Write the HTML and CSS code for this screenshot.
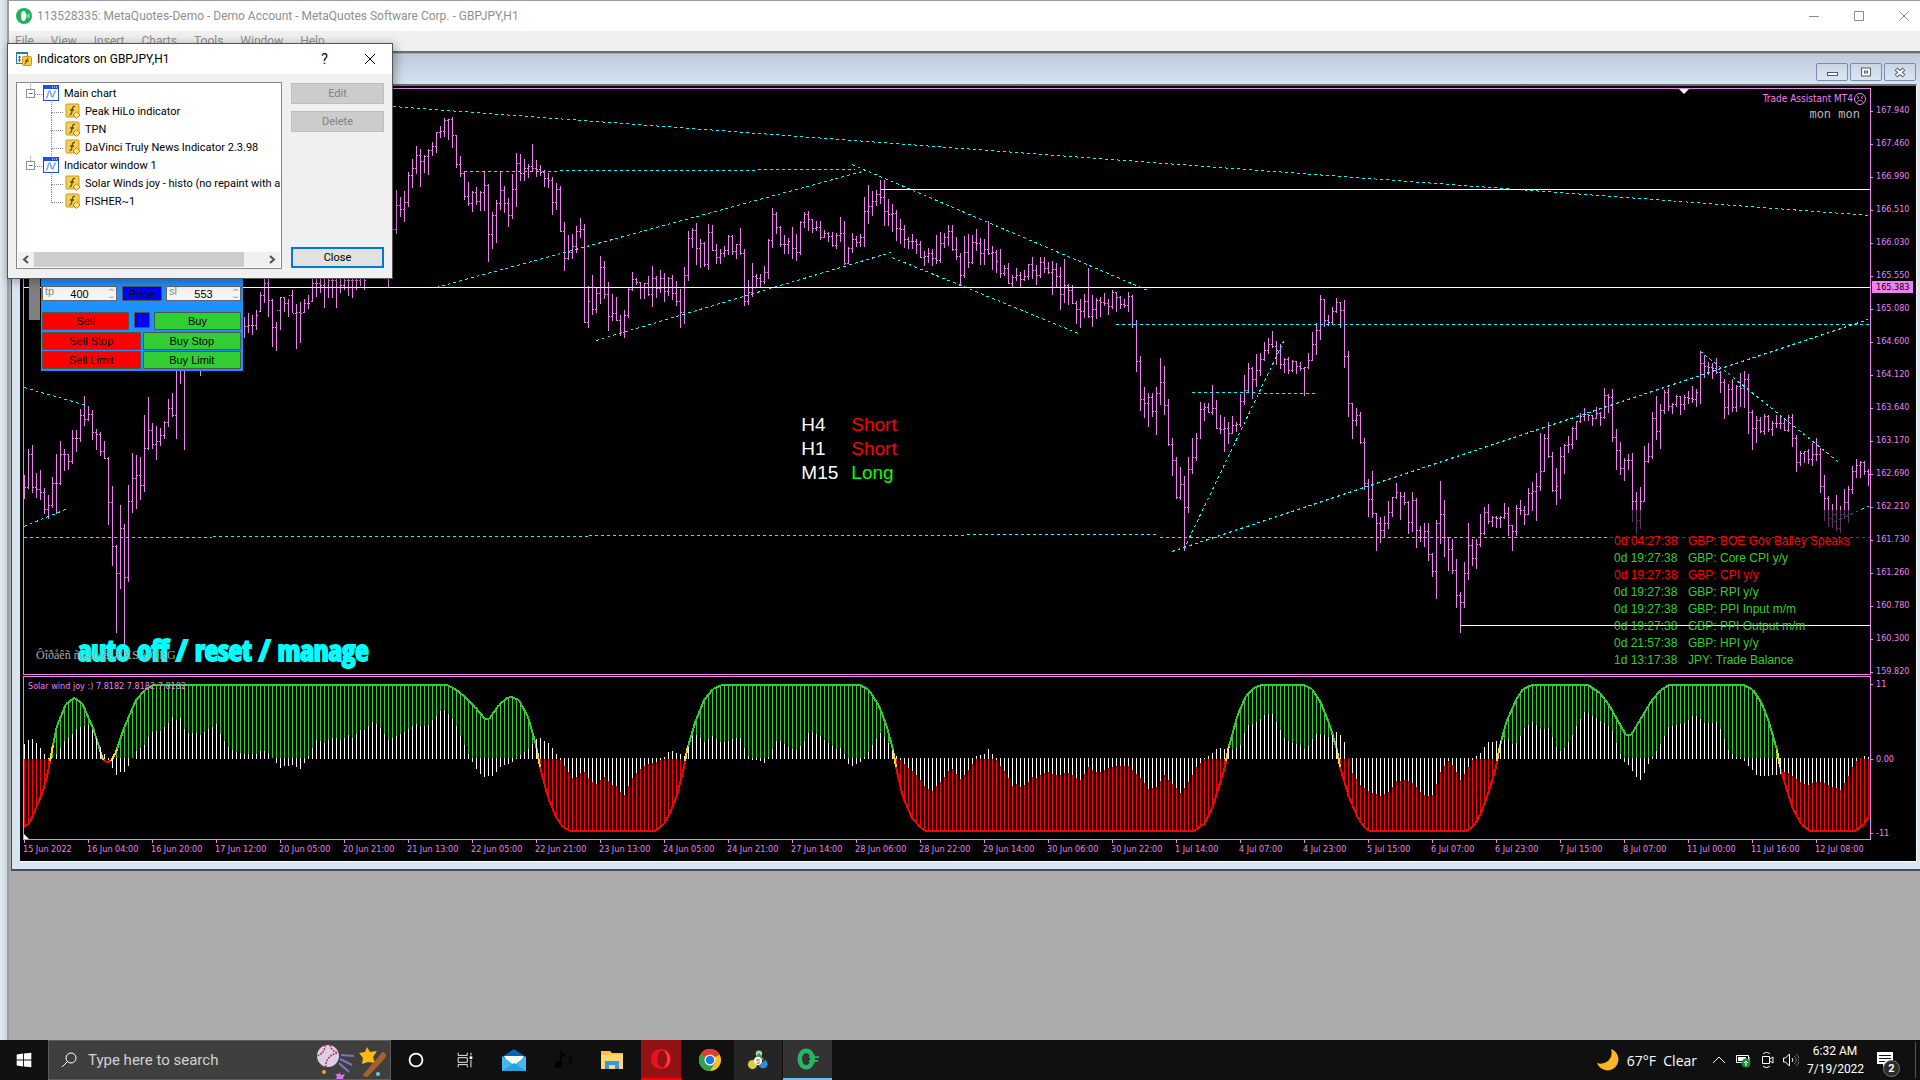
FILE: index.html
```html
<!DOCTYPE html>
<html lang="en">
<head>
    <meta charset="UTF-8">
    <meta name="viewport" content="width=device-width, initial-scale=1.0">
    <title>113528335: MetaQuotes-Demo - GBPJPY,H1</title>
    <link rel="stylesheet" href="styles.css">
</head>
<body>

    <!-- Shared tree icons -->
    <svg class="defs" aria-hidden="true">
        <symbol id="icon-chart" viewBox="0 0 16 16">
            <rect x="0.5" y="0.5" width="15" height="15" fill="#fff" stroke="#1c50c8"/>
            <rect x="0" y="0" width="16" height="4" fill="#1c50e0"/>
            <path d="M9 2h1M11 2h1M13 2h1" stroke="#fff"/>
            <path d="M3 13C5 13 5 6 6.500 6S8 12 9.500 12 11 6 13 6" fill="none" stroke="#7f9df0" stroke-width="1.500"/>
        </symbol>
        <symbol id="icon-fx" viewBox="0 0 16 16">
            <rect x="1" y="1" width="13" height="13" rx="1" fill="#f3cf57" stroke="#c8981a"/>
            <path d="M10 3.500C7 3 7.500 6 7 8S6.500 12 4.500 11.500M5 7h4" fill="none" stroke="#6b4a00" stroke-width="1.300"/>
            <path d="M11.500 8.500L15 12l-3.500 3.500L8 12z" fill="#ffe27a" stroke="#b98a12"/>
        </symbol>
    </svg>

    <main class="desktop">
        <div class="app-window">
            <header class="title-bar">
                <svg class="app-icon" viewBox="0 0 16 16"><circle cx="8" cy="8" r="8" fill="#22b060"/><ellipse cx="7.500" cy="8" rx="2.500" ry="5" fill="#fff"/><path d="M10 7h4M10 9h4" stroke="#fff" stroke-width="0.800"/></svg>
                <span class="title-text">113528335: MetaQuotes-Demo - Demo Account - MetaQuotes Software Corp. - GBPJPY,H1</span>
                <div class="window-controls">
                    <button type="button" aria-label="Minimize"><svg viewBox="0 0 12 12"><path d="M1 6.500h10"/></svg></button>
                    <button type="button" aria-label="Maximize"><svg viewBox="0 0 12 12"><path d="M1.500 1.500h9v9h-9z"/></svg></button>
                    <button type="button" aria-label="Close window"><svg viewBox="0 0 12 12"><path d="M1 1l10 10M11 1L1 11"/></svg></button>
                </div>
            </header>
            <nav class="menu-bar">
                <button type="button">File</button>
                <button type="button">View</button>
                <button type="button">Insert</button>
                <button type="button">Charts</button>
                <button type="button">Tools</button>
                <button type="button">Window</button>
                <button type="button">Help</button>
            </nav>

            <div class="workspace">
                <section class="chart-window">
                    <div class="chart-caption">
                        <button type="button" aria-label="Minimize chart"><svg viewBox="0 0 14 12"><rect x="2.500" y="6.500" width="10" height="3" fill="#fff" stroke="#555b66"/></svg></button>
                        <button type="button" aria-label="Restore chart"><svg viewBox="0 0 14 12"><rect x="2.500" y="2" width="9" height="8" fill="#fff" stroke="#555b66"/><rect x="5.500" y="5" width="3" height="2" fill="none" stroke="#555b66"/></svg></button>
                        <button type="button" aria-label="Close chart"><svg viewBox="0 0 14 12"><path d="M3 3l8 7M11 3l-8 7" stroke="#555b66" stroke-width="4"/><path d="M3.500 3.500l7 6M10.500 3.500l-7 6" stroke="#fff" stroke-width="2"/></svg></button>
                    </div>

                    <div class="chart-client">
                        <!-- Price chart -->
                        <div class="pane price-pane">
                            <svg id="price-svg" viewBox="24 89 1846 585" preserveAspectRatio="none"></svg>
                            <div class="order-strip"></div>
                            <form class="order-panel">
                                <div class="order-row levels">
                                    <div class="level"><label for="tp">tp</label><input id="tp" type="text" value="400"><i class="spin"></i></div>
                                    <button type="button" class="blue">Price</button>
                                    <div class="level"><label for="sl">sl</label><input id="sl" type="text" value="553"><i class="spin"></i></div>
                                </div>
                                <div class="order-row market">
                                    <button type="button" class="red">Sell</button>
                                    <button type="button" class="blue small" aria-label="Close all"></button>
                                    <button type="button" class="green">Buy</button>
                                </div>
                                <div class="order-row">
                                    <button type="button" class="red">Sell Stop</button>
                                    <button type="button" class="green">Buy Stop</button>
                                </div>
                                <div class="order-row">
                                    <button type="button" class="red">Sell Limit</button>
                                    <button type="button" class="green">Buy Limit</button>
                                </div>
                            </form>
                            <div class="expert-name">
                                <p>Trade Assistant MT4<svg viewBox="0 0 12 12"><circle cx="6" cy="6" r="5.500"/><path d="M3 9.500c1-3 5-3 6 0M3 3.500l2 1M9 3.500l-2 1M4 5v1M8 5v1"/></svg></p>
                                <p class="mono">mon mon</p>
                            </div>
                            <div class="signals">
                                <span>H4</span><span class="short">Short</span>
                                <span>H1</span><span class="short">Short</span>
                                <span>M15</span><span class="long">Long</span>
                            </div>
                            <ul class="news">
                                <li class="high"><span>0d 04:27:38</span>GBP: BOE Gov Bailey Speaks</li>
                                <li><span>0d 19:27:38</span>GBP: Core CPI y/y</li>
                                <li class="high"><span>0d 19:27:38</span>GBP: CPI y/y</li>
                                <li><span>0d 19:27:38</span>GBP: RPI y/y</li>
                                <li><span>0d 19:27:38</span>GBP: PPI Input m/m</li>
                                <li class="struck"><span>0d 19:27:38</span>GBP: PPI Output m/m</li>
                                <li><span>0d 21:57:38</span>GBP: HPI y/y</li>
                                <li><span>1d 13:17:38</span>JPY: Trade Balance</li>
                            </ul>
                            <p class="manage">auto off / reset / manage</p>
                            <p class="watermark">Ôîðåêñ ñîâåòíèê FXSA.ORG</p>
                        </div>
                        <div class="axis price-axis">
                            <span>167.940</span><span>167.460</span><span>166.990</span><span>166.510</span><span>166.030</span><span>165.550</span>
                            <span>165.080</span><span>164.600</span><span>164.120</span><span>163.640</span><span>163.170</span><span>162.690</span>
                            <span>162.210</span><span>161.730</span><span>161.260</span><span>160.780</span><span>160.300</span><span>159.820</span>
                            <b class="bid">165.383</b>
                        </div>

                        <!-- Indicator window -->
                        <div class="pane wave-pane">
                            <svg id="wave-svg" viewBox="24 677 1846 162" preserveAspectRatio="none"></svg>
                            <p class="wave-name">Solar wind joy :) 7.8182 7.8182 7.8182</p>
                        </div>
                        <div class="axis wave-axis"><span>11</span><span class="zero">0.00</span><span>-11</span></div>

                        <div class="time-axis" id="time-axis"></div>
                    </div>
                </section>
            </div>
        </div>

        <!-- Indicators list dialog -->
        <div class="dialog" role="dialog" aria-labelledby="dialog-title">
            <div class="dialog-title">
                <svg class="app-icon" viewBox="0 0 16 16"><rect x="0.500" y="1.500" width="11" height="11" fill="#fff" stroke="#2b78b8"/><path d="M0 2h12" stroke="#2b78b8" stroke-width="2"/><path d="M2 6h3M3.500 5v6M2 9h3" stroke="#567"/><rect x="6.500" y="5.500" width="9" height="9" rx="1" fill="#f6cf3f" stroke="#c8981a"/><path d="M12.500 7C10 7 11 13 8.500 13M9 10h4" fill="none" stroke="#5a4000"/></svg>
                <h1 id="dialog-title">Indicators on GBPJPY,H1</h1>
                <button type="button" class="help">?</button>
                <button type="button" aria-label="Close dialog"><svg viewBox="0 0 12 12"><path d="M1 1l10 10M11 1L1 11"/></svg></button>
            </div>
            <div class="dialog-body">
                <div class="tree">
                    <ul>
                        <li class="root"><i>−</i><svg><use href="#icon-chart"/></svg>Main chart</li>
                        <li><svg><use href="#icon-fx"/></svg>Peak HiLo indicator</li>
                        <li><svg><use href="#icon-fx"/></svg>TPN</li>
                        <li><svg><use href="#icon-fx"/></svg>DaVinci Truly News Indicator 2.3.98</li>
                        <li class="root last"><i>−</i><svg><use href="#icon-chart"/></svg>Indicator window 1</li>
                        <li><svg><use href="#icon-fx"/></svg>Solar Winds joy - histo (no repaint with a</li>
                        <li><svg><use href="#icon-fx"/></svg>FISHER~1</li>
                    </ul>
                    <div class="scroll">
                        <svg viewBox="0 0 16 15"><path d="M10 4L6 7.500l4 3.500"/></svg>
                        <span class="thumb"></span>
                        <svg viewBox="0 0 16 15"><path d="M6 4l4 3.500L6 11"/></svg>
                    </div>
                </div>
                <div class="dialog-buttons">
                    <button type="button" disabled>Edit</button>
                    <button type="button" disabled>Delete</button>
                    <button type="button" class="default">Close</button>
                </div>
            </div>
        </div>
    </main>

    <footer class="taskbar">
        <button type="button" class="task start" aria-label="Start"><svg viewBox="0 0 24 24"><path fill="#fff" d="M4 6l7-1v6.500H4zM12 4.900L20 4v7.500h-8zM4 12.500h7V19l-7-1zM12 12.500h8V20l-8-1z"/></svg></button>
        <div class="search">
            <svg class="glass" viewBox="0 0 16 16"><circle cx="10" cy="6" r="5"/><path d="M6.500 9.500L1 15"/></svg>
            <input type="text" placeholder="Type here to search" aria-label="Search">
            <svg class="art" viewBox="0 0 70 38">
                <circle cx="12" cy="15" r="11" fill="#dccfe6"/>
                <path d="M9 4c0 6-3 9-8 11M10 26c-1-6 3-12 11-14M14 4c1 4 4 7 8 8" fill="none" stroke="#c2355f" stroke-width="1.500" stroke-dasharray="2 1"/>
                <path d="M25 14l13 1M24 18l12 6M23 22l10 9" stroke="#7b74c9" stroke-width="2"/>
                <path d="M51 6l3 5 7-1-4 6 2 6-7-1-6 2 1-6-4-5 6-1z" fill="#ffb812"/>
                <path d="M67 12c3 1 2 4 0 6L51 35l-3-1z" fill="#a8602f" stroke="#a8602f" stroke-width="2"/>
                <circle cx="8" cy="31" r="2" fill="#f7a50b"/><circle cx="62" cy="33" r="2" fill="#60d2e2"/>
                <path d="M23 31l2 3 4-1-2 4 1 2-4-1-4 1 1-4-2-2 4 0z" fill="#d574f7"/>
            </svg>
        </div>
        <button type="button" class="task" aria-label="Cortana"><svg viewBox="0 0 24 24"><circle cx="12" cy="12" r="7" fill="none" stroke="#fff" stroke-width="2"/></svg></button>
        <button type="button" class="task" aria-label="Task view"><svg viewBox="0 0 24 24"><path d="M4.500 4v3h10V4M4.500 20v-3h10v3M4.500 9.500h10v5h-10zM18.500 4v3M18.500 12v8" fill="none" stroke="#fff"/><path d="M17 8h3v3h-3z" fill="#fff"/></svg></button>
        <button type="button" class="task wide" aria-label="Mail"><svg viewBox="0 0 24 24"><path d="M0 9L12 1l12 8v14H0z" fill="#0d63b5"/><path d="M2 8h20l-5 9H7z" fill="#fff"/><path d="M0 8l12 9 12-9v15H0z" fill="#3fb9ee"/><path d="M0 23l12-8 12 8z" fill="#279fe0"/></svg></button>
        <button type="button" class="task" aria-label="Music"><svg viewBox="0 0 24 24"><path d="M10 17V4c2 3 5 2 5 5" fill="none" stroke="#000" stroke-width="2"/><circle cx="7" cy="17" r="4"/><path d="M17 9l5 5-2 2V8l2 2-5 5" fill="none" stroke="#000"/></svg></button>
        <button type="button" class="task wide" aria-label="File Explorer"><svg viewBox="0 0 24 24"><path d="M1 3h9l2 2h11v16H1z" fill="#f6c44c"/><path d="M1 7h22v14H1z" fill="#ffd670"/><path d="M5 21v-8h14v8h-4v-4H9v4z" fill="#3d96dd"/></svg></button>
        <button type="button" class="task opera" aria-label="Opera"><svg viewBox="0 0 24 24"><circle cx="12" cy="12" r="11" fill="#e81224"/><ellipse cx="13" cy="12" rx="5" ry="9" fill="#911313"/><path d="M15 2a11 11 0 0 1 0 20c6-5 6-15 0-20" fill="#ff5258"/></svg></button>
        <button type="button" class="task wide" aria-label="Chrome"><svg viewBox="0 0 24 24"><circle cx="12" cy="12" r="11" fill="#fbc116"/><path d="M12 12L2.500 6.500A11 11 0 0 1 21.500 6.500z" fill="#e53a2d"/><path d="M12 12L2.500 6.500A11 11 0 0 0 12 23l5-8z" fill="#2da14c"/><circle cx="12" cy="12" r="5.500" fill="#fff"/><circle cx="12" cy="12" r="4.300" fill="#1f72e8"/></svg></button>
        <button type="button" class="task running" aria-label="MetaTrader 5"><svg viewBox="0 0 24 24"><circle cx="13" cy="5" r="3.500" fill="#a9d8b0"/><path d="M7 12l6-8 6 8z" fill="#3f8f63"/><circle cx="6" cy="17" r="5" fill="#d8cf3f"/><path d="M12 18l8-6c5 4 2 10-4 9z" fill="#2e8fd0"/><circle cx="12" cy="13" r="4.500" fill="#fff"/><text x="12" y="16" text-anchor="middle" class="five">5</text></svg></button>
        <button type="button" class="task active" aria-label="MetaTrader 4"><svg viewBox="0 0 24 24"><ellipse cx="10" cy="12" rx="7" ry="9" fill="none" stroke="#27b463" stroke-width="5"/><path d="M13 10h11M13 14h10M18 7v10" stroke="#27b463" stroke-width="2"/></svg></button>

        <div class="tray">
            <svg class="moon" viewBox="0 0 22 22"><path d="M14 0A11 11 0 1 1 0 14c9 3 17-5 14-14z" fill="#ffb524"/></svg>
            <span class="weather">67°F&nbsp; Clear</span>
            <svg class="sys" viewBox="0 0 16 16"><path d="M2 11l6-6 6 6"/></svg>
            <svg class="sys" viewBox="0 0 16 16"><path d="M1.500 3.500h12v7h-12zM14 5v4"/><path d="M3 5h8v4H3z" fill="#fff" stroke="none"/><circle cx="11" cy="11" r="4.500" fill="#12962e" stroke="none"/><path d="M11 14v-4M9 11l2-2 2 2"/></svg>
            <svg class="sys" viewBox="0 0 16 16"><path d="M3.500 4.500h7v7h-7zM11 7l3-2v6l-3-2M4 2c2-2 5-2 7 0M4 14c2 2 5 2 7 0"/></svg>
            <svg class="sys" viewBox="0 0 16 16"><path d="M0.500 6v4h2l4 4V2l-4 4zM9 6c1 1 1 3 0 4"/><path d="M11 4c3 2 3 6 0 8M13 2c4 3 4 9 0 12" stroke="#777"/></svg>
            <time class="clock">6:32 AM<br>7/19/2022</time>
            <div class="notice"><svg viewBox="0 0 16 16"><path d="M0 0h16v12H9l-3 3v-3H0z" fill="#fff"/><path d="M2 3.500h12M2 6.500h12M2 9.500h6" stroke="#111"/></svg><span>2</span></div>
        </div>
    </footer>

    <script src="chart.js"></script>
</body>
</html>
```

FILE: styles.css
```css
* {
    box-sizing: border-box;
}

html, body {
    height: 100%;
    margin: 0;
}

body {
    display: flex;
    flex-direction: column;
    overflow: hidden;
    background-color: #d5dfe8;
    font-family: Roboto, "Noto Sans", sans-serif;
    font-size: 12px;
}

button, input {
    font: inherit;
    color: inherit;
    margin: 0;
    padding: 0;
    border: none;
    background: none;
}

p, ul, h1 {
    margin: 0;
    padding: 0;
    list-style: none;
    font-weight: normal;
}

svg {
    display: block;
    flex: none;
}

.defs {
    position: absolute;
    width: 0;
    height: 0;
}

.desktop {
    flex: 1;
    display: flex;
    position: relative;
    min-height: 0;
    padding-left: 7px;
    background: linear-gradient(90deg, #e3ebf2, #cbd5de 7px);
}

/* Main application window */
.app-window {
    flex: 1;
    display: flex;
    flex-direction: column;
    min-width: 0;
    border-top: 1px solid #9b9ba3;
    border-left: 2px solid #9a9da1;
}

.title-bar {
    display: flex;
    align-items: center;
    height: 30px;
    padding-left: 7px;
    background-color: #fff;
    color: #8f8f8f;
}

.app-icon {
    width: 16px;
    height: 16px;
    margin-right: 5px;
}

.title-text {
    flex: 1;
    white-space: nowrap;
}

.window-controls {
    display: flex;
    margin-right: -6px;
}

.window-controls button {
    width: 45px;
    height: 30px;
    display: flex;
    align-items: center;
    justify-content: center;
}

.window-controls svg {
    width: 12px;
    height: 12px;
    fill: none;
    stroke: #8a8a8a;
}

.menu-bar {
    display: flex;
    gap: 17px;
    height: 20px;
    padding-left: 6px;
    background-color: #f0f0f0;
    color: #8f8f8f;
}

.workspace {
    flex: 1;
    padding: 1px 0 0 2px;
    border-top: 2px solid #6d6d6d;
    background-color: #ababab;
}

/* Chart window */
.chart-window {
    padding: 0 3px 7px 8px;
    border-left: 1px solid #45484c;
    border-bottom: 2px solid #4c4c52;
    background-color: #d7e4f2;
}

.chart-caption {
    display: flex;
    align-items: center;
    justify-content: flex-end;
    gap: 2px;
    height: 30px;
    margin: 0 -3px 0 -8px;
    padding: 5px 4px 0 0;
    background: linear-gradient(#bccad9, #d7e4f2);
}

.chart-caption button {
    display: flex;
    align-items: center;
    justify-content: center;
    width: 32px;
    height: 18px;
    border: 1px solid #7d8bae;
    border-radius: 2px;
    background: linear-gradient(#c9d6e5, #dbe6f2);
}

.chart-caption svg {
    width: 14px;
    height: 12px;
}

.chart-client {
    display: grid;
    grid-template-columns: 1fr 45px;
    padding: 2px 0 0 3px;
    border-top: 2px solid #6b6b6b;
    border-right: 1px solid #fff;
    border-bottom: 1px solid #fff;
    background-color: #000;
    color: #ee82ee;
    font-family: "DejaVu Sans Condensed", "DejaVu Sans", sans-serif;
    font-size: 9px;
}

.pane {
    position: relative;
    border: 1px solid #ee82ee;
    min-width: 0;
}

.pane svg {
    width: 100%;
}

.price-pane {
    margin-bottom: 1px;
}

#price-svg {
    height: 585px;
}

#wave-svg {
    height: 162px;
}

.axis {
    position: relative;
    display: flex;
    flex-direction: column;
}

.axis span {
    padding-left: 5px;
    position: relative;
}

.axis span::before {
    content: "";
    position: absolute;
    left: 0;
    top: 50%;
    width: 2px;
    height: 1px;
    background-color: #ee82ee;
}

.price-axis {
    padding-top: 6px;
    height: 588px;
}

.price-axis span {
    line-height: 33px;
    height: 33px;
}

.bid {
    position: absolute;
    left: 1px;
    right: 3px;
    top: 193px;
    padding-left: 4px;
    background-color: #ee82ee;
    color: #000;
    font-weight: normal;
    line-height: 12px;
}

.wave-axis {
    justify-content: space-between;
    padding-top: 1px;
    line-height: 14px;
}

/* Text over the price chart */
.expert-name {
    position: absolute;
    top: 3px;
    right: 4px;
    font-size: 10px;
    line-height: 14px;
    text-align: right;
}

.expert-name p:first-child {
    display: flex;
    align-items: center;
}

.expert-name svg {
    width: 12px;
    height: 12px;
    margin-left: 1px;
    fill: none;
    stroke: #ee82ee;
}

.expert-name .mono {
    padding: 1px 6px 0 0;
    font-family: "DejaVu Sans Mono", monospace;
    font-size: 12px;
    color: #bcbcbc;
}

.signals {
    position: absolute;
    left: calc(42% + 2px);
    top: 324px;
    display: grid;
    grid-template-columns: 50px auto;
    font-family: "Liberation Sans", Arial, sans-serif;
    font-size: 19px;
    line-height: 24px;
    color: #fff;
}

.short {
    color: #f00;
}

.long {
    color: #0f0;
}

.news {
    position: absolute;
    right: 0;
    top: 421px;
    width: 260px;
    height: 160px;
    padding: 23px 0 0 4px;
    background-color: rgba(0, 0, 0, 0.6);
    font-family: "Liberation Sans", Arial, sans-serif;
    font-size: 12px;
    line-height: 17px;
    white-space: nowrap;
    color: #32cd32;
}

.news span {
    display: inline-block;
    width: 74px;
}

.news .high {
    color: #f00;
}

/* The level line runs over this event */
.news .struck {
    margin-left: -4px;
    padding-left: 4px;
    background: linear-gradient(#fff, #fff) 0 7px / 100% 1px no-repeat;
}

.manage {
    position: absolute;
    left: 54px;
    bottom: 6px;
    font-family: Impact, "Liberation Sans Narrow", "Open Sans Condensed", "DejaVu Sans Condensed", sans-serif;
    font-size: 29px;
    font-weight: bold;
    line-height: 36px;
    color: #0ff;
    -webkit-text-stroke: 2px #0ff;
    white-space: nowrap;
}

.watermark {
    position: absolute;
    left: 12px;
    bottom: 11px;
    font-family: "Liberation Serif", "Times New Roman", serif;
    font-size: 12px;
    line-height: 16px;
    color: #a9a9a9;
}

.wave-name {
    position: absolute;
    left: 4px;
    top: 2px;
    line-height: 14px;
}

.time-axis {
    display: grid;
    grid-template-columns: repeat(29, 64px);
    height: 21px;
    overflow: hidden;
    white-space: nowrap;
}

.time-axis span {
    position: relative;
    padding-top: 4px;
    line-height: 11px;
}

.time-axis span::before {
    content: "";
    position: absolute;
    left: 1px;
    top: 0;
    width: 1px;
    height: 3px;
    background-color: #ee82ee;
}

/* Order panel */
.order-strip {
    position: absolute;
    left: 5px;
    top: 180px;
    width: 11px;
    height: 51px;
    background-color: #808080;
}

.order-panel {
    position: absolute;
    left: 17px;
    top: 180px;
    width: 202px;
    height: 102px;
    padding: 17px 2px 0 1px;
    background-color: #1e90ff;
    color: #000;
    font-family: "Liberation Sans", Arial, sans-serif;
    font-size: 11px;
}

.order-row {
    display: flex;
    gap: 2px;
    height: 19px;
}

.order-row button {
    flex: 1;
    height: 18px;
    border: 1px solid #4a5a4a;
    border-radius: 1px;
}

.levels, .market {
    justify-content: space-between;
    height: 26px;
}

.market {
    height: 20px;
}

.market button {
    flex: 0 0 87px;
}

.market .small {
    flex: 0 0 16px;
    height: 16px;
}

.levels button {
    flex: 0 0 40px;
    height: 15px;
    line-height: 12px;
}

.order-row .red {
    background-color: #f00;
}

.order-row .green {
    background-color: #32cd32;
}

.order-row .blue {
    background-color: #00f;
}

.level {
    position: relative;
    display: flex;
    width: 75px;
    height: 15px;
    border: 1px solid #666;
    background-color: #f4f4f4;
}

.level label {
    position: absolute;
    left: 2px;
    top: -2px;
    color: #888;
}

.level input {
    width: 100%;
    text-align: center;
}

.spin {
    position: absolute;
    right: 2px;
    top: 2px;
    width: 5px;
    height: 9px;
    border: 1px solid #999;
    border-width: 1px 0;
    border-radius: 3px;
}

/* Indicators dialog */
.dialog {
    position: absolute;
    left: 7px;
    top: 43px;
    width: 386px;
    height: 236px;
    border: 1px solid #555;
    background-color: #f0f0f0;
    box-shadow: 2px 2px 10px rgba(0, 0, 0, 0.35);
    color: #000;
}

.dialog-title {
    display: flex;
    align-items: center;
    height: 30px;
    padding: 0 0 0 8px;
    background-color: #fff;
}

.dialog-title h1 {
    flex: 1;
    font-size: 12px;
}

.dialog-title button {
    width: 45px;
    height: 28px;
    display: flex;
    align-items: center;
    justify-content: center;
    font-size: 14px;
}

.dialog-title svg {
    fill: none;
    stroke: #000;
}

.dialog-title button svg {
    width: 12px;
    height: 12px;
}

.dialog-body {
    display: flex;
    justify-content: space-between;
    padding: 8px 8px 0;
    font-size: 11px;
}

.tree {
    display: flex;
    flex-direction: column;
    justify-content: space-between;
    width: 266px;
    height: 187px;
    padding: 1px;
    border: 1px solid #828790;
    background-color: #fff;
}

.tree ul {
    overflow: hidden;
}

.tree li {
    position: relative;
    display: flex;
    align-items: center;
    gap: 4px;
    height: 18px;
    padding-left: 47px;
    white-space: nowrap;
}

.tree li.root {
    padding-left: 25px;
    gap: 5px;
}

.tree li svg {
    width: 16px;
    height: 16px;
}

.tree li::before {
    content: "";
    position: absolute;
    left: 33px;
    top: 0;
    width: 11px;
    height: 10px;
    border: 1px dotted #888;
    border-width: 0 0 1px 1px;
}

.tree li.root::before {
    left: 12px;
}

.tree li:not(.root):not(:last-child)::after {
    content: "";
    position: absolute;
    left: 33px;
    top: 10px;
    height: 8px;
    border-left: 1px dotted #888;
}

.tree i {
    position: absolute;
    left: 8px;
    top: 5px;
    width: 9px;
    height: 9px;
    border: 1px solid #919191;
    background-color: #fff;
    color: #1c4fa8;
    font-size: 10px;
    font-style: normal;
    line-height: 7px;
    text-align: center;
}

.scroll {
    display: flex;
    height: 15px;
    background-color: #f0f0f0;
}

.scroll svg {
    width: 16px;
    height: 15px;
    fill: none;
    stroke: #505050;
    stroke-width: 2;
}

.thumb {
    flex: 1;
    margin-right: 20px;
    background-color: #cdcdcd;
}

.dialog-buttons {
    display: flex;
    flex-direction: column;
    gap: 7px;
    width: 93px;
    padding: 1px 0;
}

.dialog-buttons button {
    height: 21px;
    border: 1px solid #bfbfbf;
    background-color: #ccc;
    color: #838383;
}

.dialog-buttons .default {
    margin-top: auto;
    border: 2px solid #0078d7;
    background-color: #e1e1e1;
    color: #000;
}

/* Taskbar */
.taskbar {
    display: flex;
    height: 40px;
    background-color: #101010;
    color: #fff;
}

.task {
    display: flex;
    align-items: center;
    justify-content: center;
    width: 49px;
    height: 40px;
}

.task.start {
    width: 48px;
}

.task svg {
    width: 22px;
    height: 22px;
}

.task.wide svg {
    width: 24px;
    height: 24px;
}

.task.opera {
    width: 40px;
    margin: 0 4px 0 5px;
    background-color: #911313;
    border-bottom: 2px solid #f00;
}

.running {
    background-color: #252525;
    border-right: 1px solid #101010;
}

.active {
    background-color: #333;
    border-bottom: 2px solid #76b9ed;
}

.five {
    fill: #d97b12;
    font-size: 8px;
    font-weight: bold;
}

.search {
    display: flex;
    align-items: center;
    width: 343px;
    padding: 0 4px 0 12px;
    border: 1px solid #5c5c5c;
    background-color: #3f3f3f;
}

.glass {
    width: 16px;
    height: 16px;
    fill: none;
    stroke: #fff;
}

.search input {
    flex: 1;
    min-width: 0;
    padding-left: 11px;
    font-size: 15px;
}

.search input::placeholder {
    color: #d2d2d2;
    opacity: 1;
}

.art {
    width: 70px;
    height: 38px;
}

.tray {
    display: flex;
    align-items: center;
    margin-left: auto;
    padding-right: 4px;
}

.moon {
    width: 22px;
    height: 22px;
    margin-right: 8px;
}

.weather {
    margin-right: 14px;
    font-family: "Open Sans", "Noto Sans", sans-serif;
    font-size: 14px;
}

.sys {
    width: 16px;
    height: 16px;
    margin-right: 8px;
    fill: none;
    stroke: #fff;
}

.clock {
    width: 56px;
    font-size: 12px;
    line-height: 18px;
    text-align: center;
}

.notice {
    position: relative;
    width: 53px;
    padding-left: 14px;
    border-right: 1px solid #555;
}

.notice svg {
    width: 16px;
    height: 16px;
    margin: 10px 0;
}

.notice span {
    position: absolute;
    left: 20px;
    bottom: 1px;
    width: 17px;
    height: 17px;
    border: 1px solid #777;
    border-radius: 50%;
    background-color: #2b2b2b;
    font-size: 11px;
    font-weight: bold;
    line-height: 15px;
    text-align: center;
}
```

FILE: chart.js
```javascript
const NS = 'http://www.w3.org/2000/svg';
const STEP = 4;
const ZERO = 758;

// Price bars: start x, then "high,low,close" for each bar
const priceBars = [
    [24, '475,499,487 449,489,454 445,493,487 473,498,489 470,500,492 488,514,509 495,519,505 477,508,483 454,514,483 441,485,454 449,471,454 454,470,461 430,464,438 430,452,438 409,442,415 396,426,419 406,421,414 410,440,432 429,450,434 432,456,451 441,459,458 457,525,502 486,566,546 545,633,573 505,589,528 524,660,577 485,582,501 453,513,478 455,509,475 457,500,485 415,492,448 397,450,430 423,449,444 426,460,441 428,446,435 421,439,422 399,427,408 393,417,415 340,439,360 330,384,350 320,450,340'],
    [200, '350,376,360'],
    [244, '317,338,326 313,333,325 315,335,325 310,330,315 292,312,295 270,303,283 270,317,300 299,347,327 322,351,310 297,330,297 297,312,303 299,317,295 290,313,313 304,349,312 302,343,313 299,313,303 295,309,303 265,302,283 265,297,283 265,293,285 265,308,287 262,298,280 262,298,280 262,308,287 265,293,285 260,290,280 260,296,280 250,298,280 250,290,280 250,286,275 245,290,280 240,275,270 240,270,260 240,270,260 235,270,260 230,275,260 225,287,250'],
    [392, '218,254,229 190,234,205 197,217,209 191,222,202 172,207,175 159,188,168 146,174,155 149,187,161 155,173,156 149,175,150 142,156,146 132,153,132 126,138,131 118,137,120 119,140,119 117,148,135 135,168,164 156,177,173 171,200,196 182,206,203 191,212,192 187,205,201 191,211,192 171,211,185 184,262,234 212,249,215 200,243,203 171,210,190 186,213,203 198,227,215 174,219,189 153,207,163 154,181,173 159,181,168 164,178,166 144,171,168 160,177,169 165,176,172 170,187,178 173,188,180 177,215,202 183,210,189 186,232,231 222,271,258 235,260,252 234,259,246 226,253,231 218,238,229 224,323,322 286,328,301'],
    [592, '275,315,309 287,313,293 256,304,267 261,299,294 282,331,316 294,321,313 297,321,320 315,336,332 310,338,315 288,318,289 272,291,279 278,285,282 282,299,287 283,299,283 276,296,294 266,307,278 276,298,288 270,293,278 273,302,291 277,296,278 275,300,293 281,306,301 289,328,312 267,324,275 231,281,238 228,248,230 223,265,248 239,268,243 242,267,264 224,270,232 225,251,250 244,264,257 249,264,253 246,257,250 235,255,236 235,255,251 244,259,244 228,255,253 249,306,301 280,305,292 263,297,276 274,288,278 274,288,281 266,284,272 239,279,240 208,248,214 212,234,227 226,247,244 235,254,244 238,254,241'],
    [792, '227,259,248 234,261,252 221,255,222 212,228,214 211,231,219 219,233,228 221,231,227 221,240,237 230,238,233 232,242,236 232,247,245 233,249,235 217,242,233 221,265,263 247,264,248 233,253,239 236,247,242 234,247,237 197,247,211 185,224,206 191,216,201 190,206,194 180,204,197 180,226,211 199,226,214 204,232,213 210,241,228 219,244,229 225,248,239 237,249,241 234,249,241 239,254,244 241,258,257 251,266,256 248,263,253 249,266,258 235,264,260 232,263,243 233,248,237 225,246,231 225,251,249 237,260,256 253,286,275 236,278,252 234,268,262 235,264,242 229,251,243 238,265,253 239,265,249 221,255,253 246,270,252 250,273,261'],
    [1000, '249,278,273 265,276,268 263,284,283 275,287,277 268,281,275 272,287,279 270,281,276 264,280,264 257,279,270 265,285,275 257,278,262 257,273,268 262,274,272 261,295,269 263,288,276 267,310,294 259,303,285 284,305,290 285,304,303 301,324,309 299,328,311 294,318,301 268,318,316 295,327,309 298,319,300 297,317,302 293,306,303 299,315,306 290,309,292 292,312,297 296,309,304 299,308,305 292,312,296 295,328,324 320,372,361 356,411,399 387,418,403 393,427,397 393,417,411 387,435,393 358,405,382 366,415,405 399,446,444 438,476,460 457,499,497 467,500,484 476,551,507 457,513,469 438,474,457 433,461,438'],
    [1200, '402,439,409 403,421,407 403,413,412 385,415,408 400,429,428 415,434,429 417,452,428 422,444,433 416,434,425 422,432,424 394,427,401 375,405,390 363,393,368 367,399,379 354,387,370 353,376,359 342,361,350 338,354,344 331,348,346 341,365,350 344,369,364 358,373,359 357,374,370 360,372,361 361,374,366 362,371,368 367,396,367 353,369,360 332,361,344 323,355,330 295,340,299 299,327,320 315,326,322 307,325,311 298,313,302 302,328,310 300,368,356 351,417,403 403,439,420 408,426,415 412,444,442 438,490,483 479,517,499 471,518,513 513,551,523 517,543,530 516,537,523 501,529,512 497,517,497 483,499,492'],
    [1400, '492,520,496 492,505,502 501,534,522 492,532,500 498,548,530 526,542,537 523,547,531 523,561,554 553,577,571 520,599,523 481,544,514 500,557,537 537,571,549 539,574,570 559,608,595 592,633,602 562,608,573 523,580,545 539,566,558 539,569,544 514,547,533 507,535,512 504,524,521 516,527,517 516,528,518 516,528,517 503,519,513 507,536,525 525,551,531 505,536,508 500,515,510 506,525,514 488,515,493 482,511,491 473,521,486 433,491,471 434,472,438 422,458,456 452,492,490 468,505,486'],
    [1560, '447,499,456 444,474,445 436,453,444 427,449,428 421,440,421 413,423,416 408,421,414 414,421,415 415,426,418 407,419,413 412,426,417 388,419,395 394,413,397 389,442,437 429,470,450 442,475,468 458,481,460 454,470,460 453,522,501 492,534,520 487,529,501 446,502,461 443,463,456 412,459,418 396,440,431 404,449,410 390,414,392 388,411,406 403,414,404 395,407,396 396,415,404 395,410,397 391,404,398 386,403,399 389,407,392'],
    [1700, '351,404,363 355,378,366 362,375,367 363,379,368 358,374,372 371,393,382 379,419,407 384,415,389 379,412,407 385,412,386 373,407,388 371,408,379 374,434,412 410,450,428 416,443,420 417,433,431 414,435,416 415,432,429 421,436,423 415,428,423 415,429,423 418,431,430 415,432,417 414,447,438 435,472,462 451,466,453 451,463,451 449,464,459 443,466,454 438,461,454 448,493,486 475,521,498 496,527,518 504,528,514 495,531,528 506,533,514 489,519,502 486,523,489 466,494,471 459,478,465 461,478,462 461,475,471 469,486,474']
];

// Dashed trend lines: x1, y1, x2, y2
const trendLines = [
    [393, 106.5, 1870, 215.5], [464, 171.5, 855, 169.5], [436, 287.5, 866, 170.5],
    [852, 164.5, 1148, 290.5], [596, 340.5, 891, 252.5], [892, 257.5, 1081, 334.5],
    [1116, 324.5, 1870, 324.5], [1192, 392.5, 1256, 392.5], [1258, 393.5, 1316, 393.5],
    [1184, 549, 1284, 340.5], [1172, 551.5, 1868, 319.5], [1700, 351, 1841, 464],
    [24, 387.5, 87, 405.5], [24, 526.5, 68, 508.5], [24, 537.5, 212, 537.5],
    [213, 536.5, 588, 536.5], [589, 535.5, 967, 535.5], [967, 534.5, 1158, 534.5],
    [1160, 537.5, 1870, 537.5], [1834, 522, 1870, 505.5]
];

// Wave outline: x, y
const wave = [
    [24, 827], [30, 822], [34, 813], [38, 803], [42, 794], [46, 780], [49, 767], [52, 750], [57, 726], [66, 704], [74, 698],
    [82, 703], [93, 728], [100, 750], [103, 760], [107, 762], [111, 761], [116, 752], [124, 728], [136, 700], [145, 690], [153, 685],
    [447, 685], [455, 689], [464, 696], [475, 707], [485, 719], [489, 719], [499, 705], [507, 698], [511, 697], [519, 700],
    [528, 717], [536, 745], [540, 767], [548, 797], [556, 817], [563, 827], [571, 831], [655, 831], [664, 824], [670, 813],
    [677, 795], [684, 767], [687, 750], [695, 723], [704, 700], [713, 689], [722, 685], [860, 685], [869, 690], [879, 706],
    [887, 727], [893, 750], [896, 767], [903, 797], [912, 818], [921, 828], [926, 831], [1194, 831], [1205, 823], [1213, 806],
    [1220, 783], [1225, 767], [1228, 750], [1238, 714], [1246, 696], [1254, 688], [1261, 685], [1304, 685], [1312, 689],
    [1321, 703], [1330, 726], [1337, 750], [1340, 767], [1349, 797], [1358, 818], [1365, 828], [1370, 831], [1466, 831],
    [1474, 826], [1481, 813], [1489, 791], [1496, 767], [1499, 750], [1506, 723], [1516, 700], [1523, 689], [1532, 685],
    [1588, 685], [1600, 693], [1609, 705], [1618, 721], [1626, 735], [1631, 735], [1643, 715], [1652, 700], [1661, 690],
    [1669, 685], [1744, 685], [1753, 690], [1761, 702], [1768, 719], [1777, 750], [1780, 767], [1787, 790], [1793, 809],
    [1802, 825], [1810, 831], [1855, 831], [1863, 825], [1870, 815]
];

// Histogram profile in sample units, 49 samples per 30px, third of a pixel in height, level 356 = zero
const histLeft = [
    40,312, 48,298, 54,298, 62,318, 70,340, 80,362, 90,350, 98,325, 104,305, 112,295, 125,268, 140,258, 147,258, 155,290, 165,330,
    177,365, 184,390, 190,410, 197,397, 204,397, 212,370, 222,335, 235,318, 245,282, 250,275, 262,275, 275,250, 283,228, 289,245,
    295,234, 302,278, 310,282, 320,280, 327,287, 340,270, 353,254, 362,295, 372,322, 382,335, 400,345, 418,344, 427,330, 437,340,
    450,370, 458,386, 465,380, 478,378, 490,389, 500,360, 512,318, 517,297, 529,311, 540,297, 549,297, 556,303, 569,285, 575,297,
    588,273, 595,273, 608,247, 618,258, 634,303, 645,293, 660,278, 680,252, 687,262, 700,255, 713,228, 720,213, 727,213, 737,234,
    745,262, 757,315, 765,345, 775,383, 785,407, 792,413, 805,408, 818,380, 830,374, 842,362, 850,345, 865,325, 872,303, 876,297,
    882,297, 895,311, 905,335, 915,362, 922,383, 935,417, 943,413, 949,398, 954,398, 962,422, 974,435, 981,420, 988,412, 997,434,
    1007,440, 1013,460, 1019,468, 1026,440, 1035,407, 1050,380, 1068,369, 1080,362, 1090,340, 1098,336, 1110,343, 1118,350,
    1125,318, 1132,281, 1140,292, 1150,307, 1163,290, 1178,311, 1190,303, 1208,294, 1215,325, 1225,360, 1230,362, 1240,365,
    1247,372, 1255,350, 1262,325, 1269,300, 1278,310, 1290,328, 1300,333, 1313,305, 1320,279, 1327,279, 1340,292, 1352,310,
    1365,330, 1373,325, 1380,350, 1386,380, 1392,380, 1405,368, 1415,345, 1425,315, 1438,278, 1450,310, 1460,345, 1470,362,
    1480,382, 1497,407, 1510,443, 1522,455, 1535,428, 1548,397, 1555,388, 1562,405
];
const histRight = [
    0,420, 10,400, 20,372, 27,348, 40,345, 46,327, 53,345, 62,372, 72,395, 85,440, 92,435, 98,443, 110,430, 118,412, 125,416,
    140,396, 150,404, 165,408, 172,398, 185,410, 197,423, 205,395, 210,380, 217,396, 230,398, 240,387, 255,381, 275,380, 288,404,
    298,425, 308,450, 320,442, 333,408, 345,432, 360,461, 372,430, 385,385, 400,355, 412,340, 420,325, 432,328, 445,332, 457,318,
    463,285, 470,258, 485,247, 498,225, 510,223, 520,262, 530,298, 542,312, 555,317, 563,330, 572,315, 578,285, 590,285, 605,294,
    612,278, 617,276, 627,308, 640,400, 655,440, 665,455, 687,470, 698,460, 712,426, 727,422, 740,434, 752,460, 760,470, 772,467,
    785,392, 797,365, 805,380, 817,423, 825,400, 837,358, 850,340, 862,308, 876,306, 888,303, 895,300, 903,318, 910,310, 922,262,
    935,248, 948,270, 962,267, 968,297, 975,330, 982,335, 995,305, 1007,255, 1020,215, 1035,232, 1050,250, 1060,262, 1067,280,
    1073,320, 1082,362, 1092,380, 1105,415, 1112,423, 1125,368, 1133,345, 1145,310, 1157,262, 1170,258, 1183,250, 1197,229,
    1205,231, 1215,250, 1230,250, 1236,246, 1245,285, 1255,335, 1265,350, 1280,365, 1290,385, 1302,411, 1315,409, 1327,408,
    1335,405, 1350,397, 1365,418, 1382,439, 1395,430, 1405,428, 1418,437, 1438,452, 1450,410, 1458,380, 1465,362, 1478,350, 1485,355
];

const times = ['15 Jun 2022', '16 Jun 04:00', '16 Jun 20:00', '17 Jun 12:00', '20 Jun 05:00', '20 Jun 21:00', '21 Jun 13:00',
    '22 Jun 05:00', '22 Jun 21:00', '23 Jun 13:00', '24 Jun 05:00', '24 Jun 21:00', '27 Jun 14:00', '28 Jun 06:00', '28 Jun 22:00',
    '29 Jun 14:00', '30 Jun 06:00', '30 Jun 22:00', '1 Jul 14:00', '4 Jul 07:00', '4 Jul 23:00', '5 Jul 15:00', '6 Jul 07:00',
    '6 Jul 23:00', '7 Jul 15:00', '8 Jul 07:00', '11 Jul 00:00', '11 Jul 16:00', '12 Jul 08:00'];

function addPath(svg, d, stroke, width, dash) {
    const path = document.createElementNS(NS, 'path');
    path.setAttribute('d', d);
    path.setAttribute('fill', 'none');
    path.setAttribute('stroke', stroke);
    path.setAttribute('stroke-width', width);
    path.setAttribute('shape-rendering', 'crispEdges');
    if (dash) {
        path.setAttribute('stroke-dasharray', dash);
    }
    svg.appendChild(path);
}

function addShape(svg, points) {
    const shape = document.createElementNS(NS, 'polygon');
    shape.setAttribute('points', points);
    shape.setAttribute('fill', '#fff');
    svg.appendChild(shape);
}

// Linear interpolation in a list of [x, y] points
function valueAt(points, x) {
    for (let i = 1; i < points.length; i++) {
        if (x <= points[i][0]) {
            const [x1, y1] = points[i - 1];
            const [x2, y2] = points[i];
            return y1 + (y2 - y1) * (x - x1) / (x2 - x1);
        }
    }
    return points[points.length - 1][1];
}

function toPoints(samples, offset) {
    const points = [];
    for (let i = 0; i < samples.length; i += 2) {
        points.push([offset + samples[i] * 30 / 49, ZERO + (samples[i + 1] - 356) / 3]);
    }
    return points;
}

function drawPrice() {
    const svg = document.getElementById('price-svg');

    let bars = '';
    for (const [start, list] of priceBars) {
        let open = null;
        list.split(' ').forEach((bar, i) => {
            const [high, low, close] = bar.split(',').map(Number);
            const x = start + i * STEP;
            bars += `M${x + 0.5} ${high}V${low}M${x + 1} ${Math.min(close, low) + 0.5}h1`;
            if (open !== null) {
                const o = Math.max(high, Math.min(open, low - 1));
                bars += `M${x - 1} ${o + 0.5}h1`;
            }
            open = close;
        });
    }
    addPath(svg, bars, '#ee82ee', 1);

    for (const [x1, y1, x2, y2] of trendLines) {
        addPath(svg, `M${x1} ${y1}L${x2} ${y2}`, '#0ff', 1, '3 3');
    }

    addPath(svg, 'M24 287.5H1870M881 189.5H1870M1460 625.5H1870', '#fff', 1);
    addShape(svg, '1679,89 1689,89 1684,94');
}

function drawWave() {
    const svg = document.getElementById('wave-svg');
    const hist = toPoints(histLeft, 0).concat(toPoints(histRight, 960));
    let green = '', red = '', white = '';

    for (let x = 24; x < 1870; x += STEP) {
        const y = Math.round(valueAt(wave, x));
        if (y < ZERO) {
            green += `M${x + 0.5} ${y}V${ZERO}`;
        } else {
            red += `M${x + 0.5} ${ZERO}V${y}`;
        }
        const h = Math.round(valueAt(hist, x));
        white += `M${x + 0.5} ${h}V${h < ZERO ? ZERO + 1 : ZERO}`;
    }
    addPath(svg, green, '#32cd32', 1);
    addPath(svg, red, '#f00', 1);

    // Outline changes colour around the zero level
    const lines = { '#32cd32': '', '#f00': '', '#ffd700': '' };
    for (let x = 24; x < 1869; x++) {
        const a = valueAt(wave, x);
        const b = valueAt(wave, x + 1);
        let color = a < ZERO ? '#32cd32' : '#f00';
        if (Math.abs(a - ZERO) < 9 && Math.abs(b - a) > 1) {
            color = '#ffd700';
        }
        lines[color] += `M${x} ${a}L${x + 1} ${b}`;
    }
    for (const color in lines) {
        addPath(svg, lines[color], color, 2);
    }
    addPath(svg, white, '#fff', 1);
    addShape(svg, '24,834 24,839 29,839');
}

drawPrice();
drawWave();

const axis = document.getElementById('time-axis');
for (const time of times) {
    const label = document.createElement('span');
    label.textContent = time;
    axis.appendChild(label);
}
```
